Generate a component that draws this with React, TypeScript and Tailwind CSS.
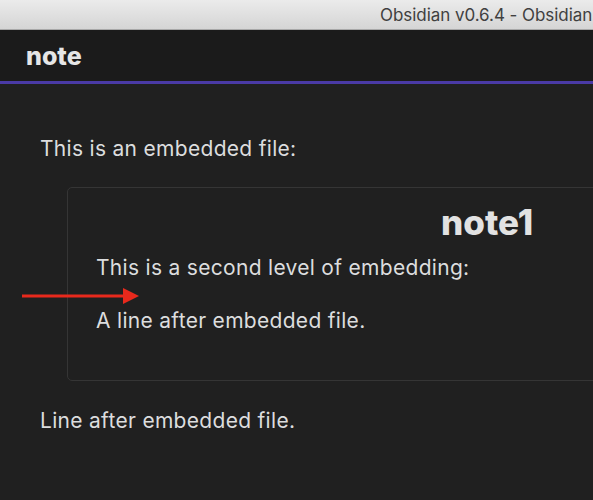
import React from "react";

export default function App() {
  return (
    <div className="relative w-[593px] h-[500px] overflow-hidden bg-[#202020] font-['Inter',sans-serif]">
      {/* macOS title bar */}
      <div className="h-[30px] bg-gradient-to-b from-[#ebebeb] to-[#d5d5d5] border-b border-[#a8a8a8] flex items-center pl-[380px] whitespace-nowrap">
        <span className="text-[17px] leading-none text-[#404040] tracking-[-0.05px] mt-[1px]">Obsidian v0.6.4 - Obsidian</span>
      </div>
      {/* note header */}
      <div className="h-[54px] bg-[#1b1b1b] flex items-center pl-[26px] border-b-[3px] border-[#4a3aa6]">
        <span className="text-[25px] font-extrabold text-[#e6e6e6] leading-none mt-[2px]">note</span>
      </div>
      {/* body */}
      <div className="relative pl-[40px] pt-[50px] text-[21px] leading-[30px] tracking-[0.3px] text-[#dcddde] whitespace-nowrap">
        <div>This is an embedded file:</div>
        <div className="mt-[23px] ml-[27px] w-[900px] h-[194px] border border-[#353535] rounded-[5px] pl-[28px] pt-[14px]">
          <div className="ml-[345px] text-[35px] leading-[40px] font-extrabold tracking-normal text-[#e2e2e2]">note1</div>
          <div className="mt-[11px]">This is a second level of embedding:</div>
          <div className="mt-[23px]">A line after embedded file.</div>
        </div>
        <div className="mt-[25px]">Line after embedded file.</div>
        {/* red arrow annotation */}
        <svg className="absolute left-[20px] top-[203px]" width="124" height="20" viewBox="0 0 124 20">
          <line x1="2" y1="9" x2="106" y2="9" stroke="#e8291c" strokeWidth="3" />
          <polygon points="103,1 119,9 103,17" fill="#e8291c" />
        </svg>
      </div>
    </div>
  );
}
